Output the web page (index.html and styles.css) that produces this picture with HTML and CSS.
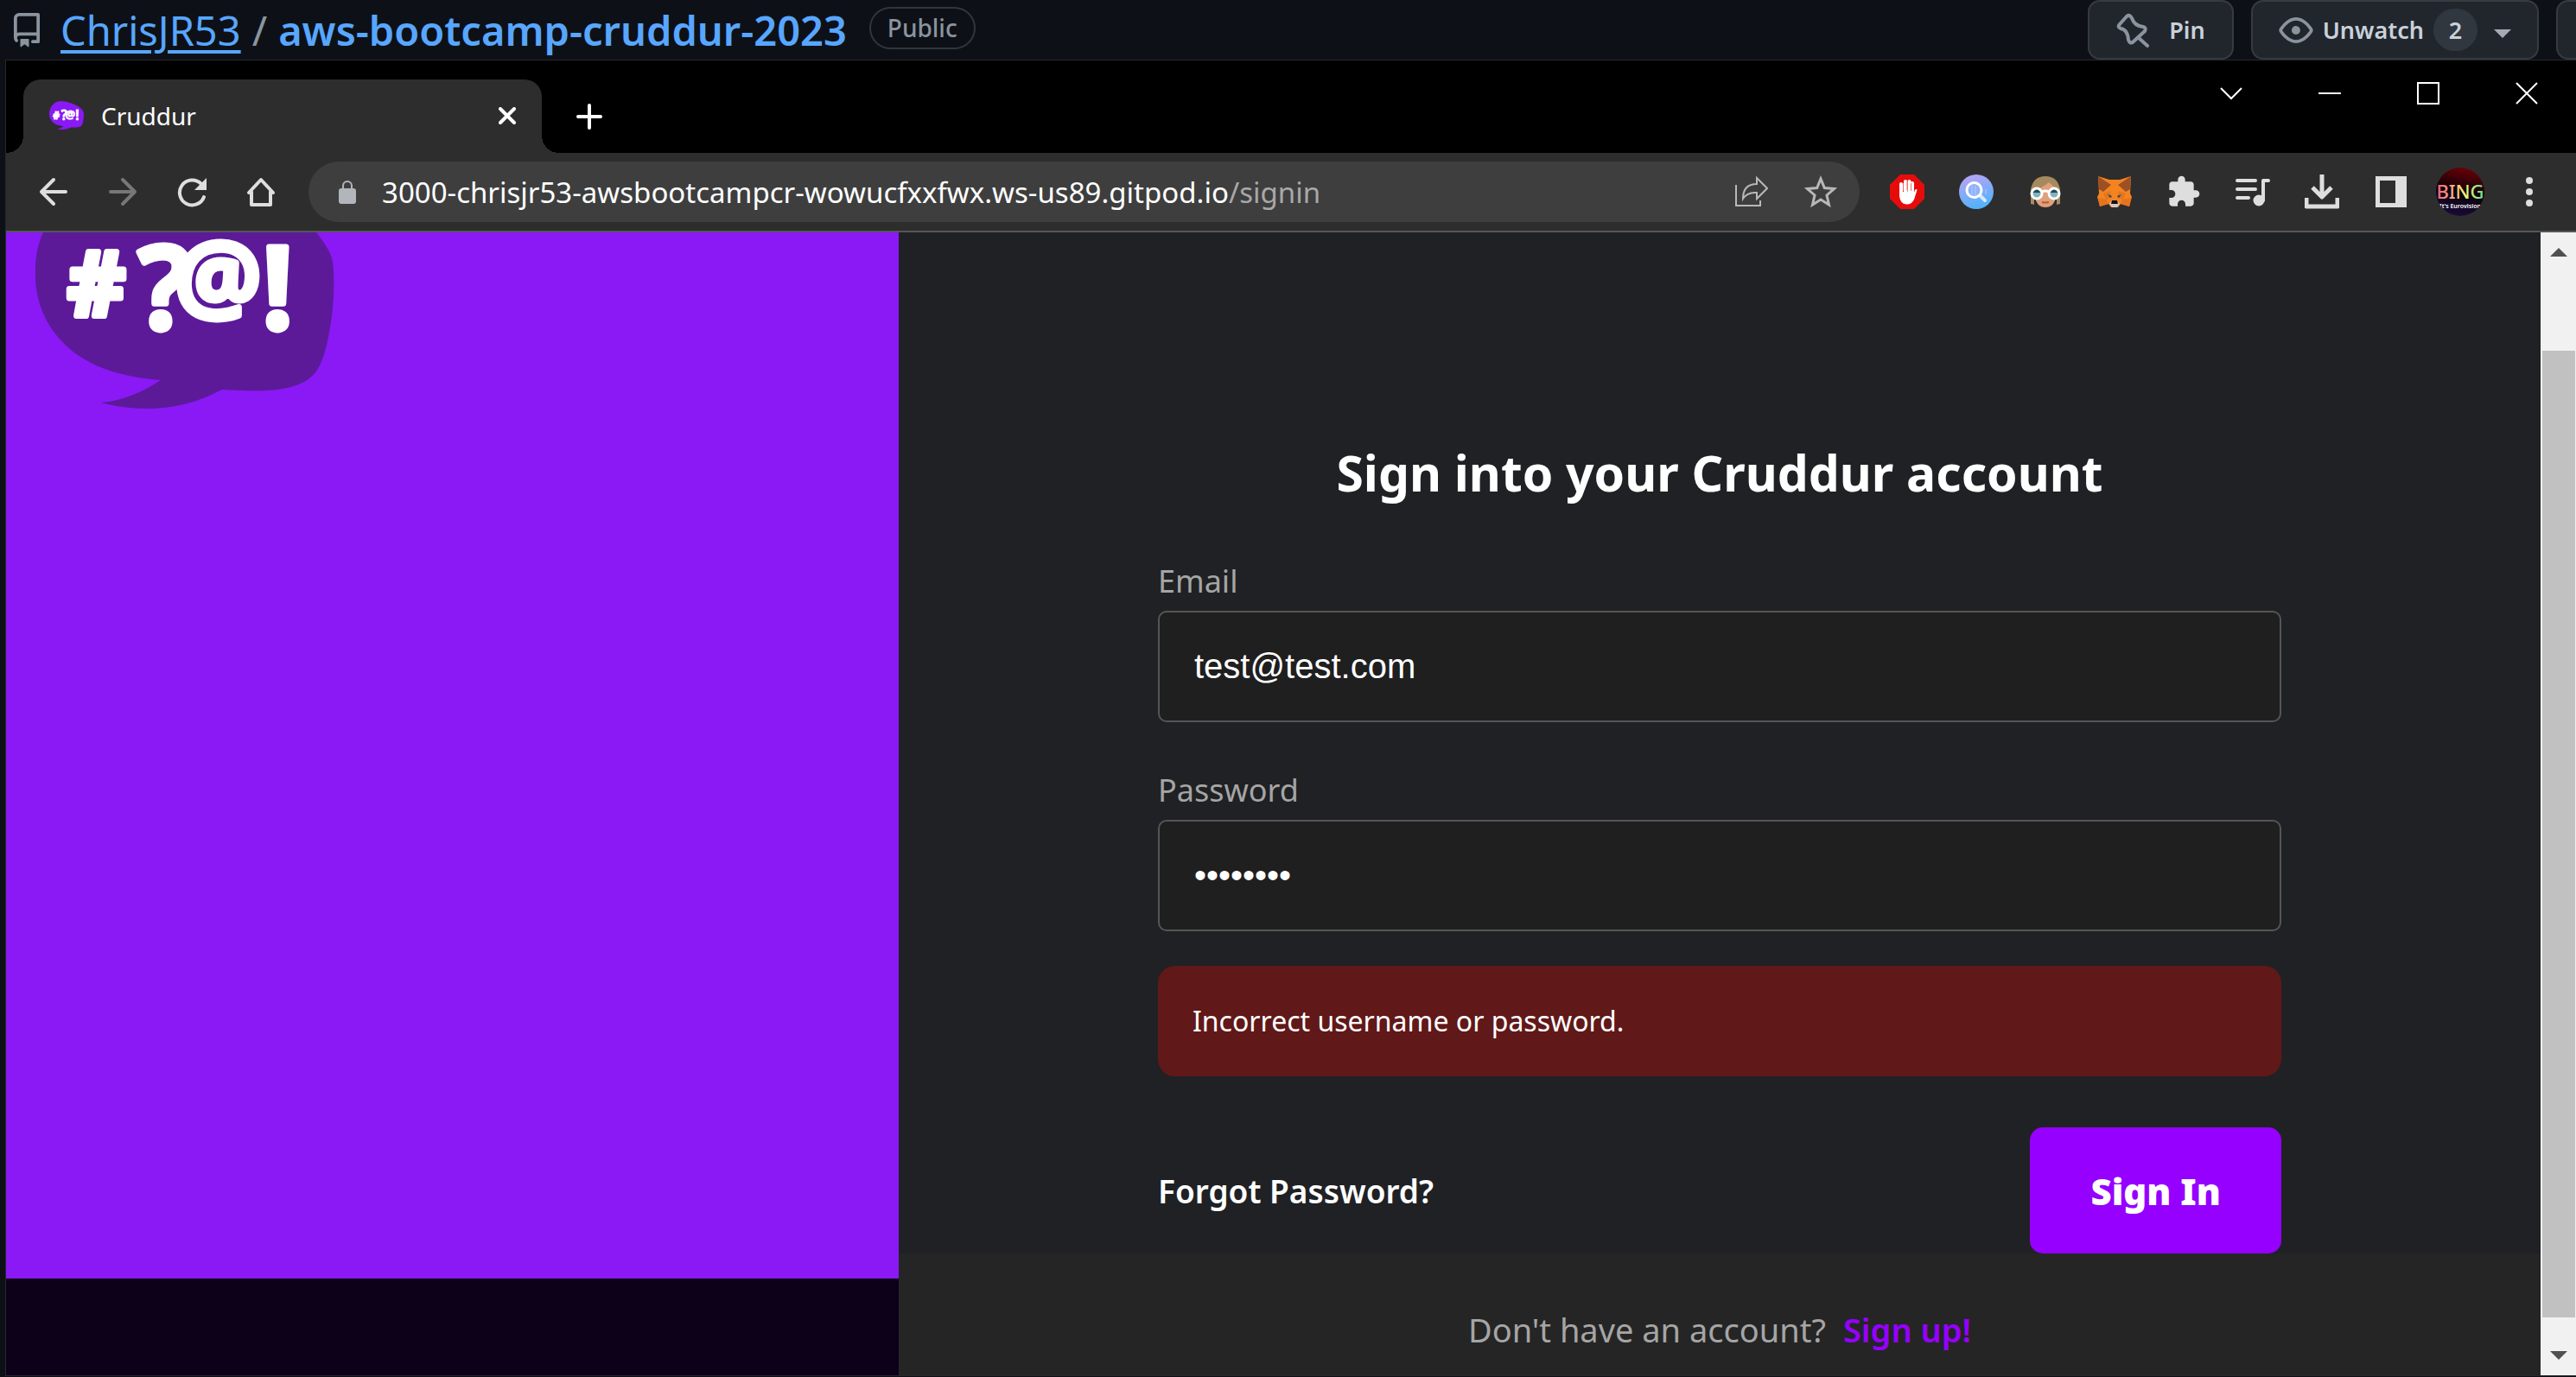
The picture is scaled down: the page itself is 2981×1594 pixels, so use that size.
FILE: index.html
```html
<!DOCTYPE html>
<html lang="en">
<head>
<meta charset="utf-8">
<meta name="viewport" content="width=device-width, initial-scale=1">
<title>Cruddur</title>
<link rel="stylesheet" href="styles.css">
</head>
<body>

<svg class="defs" aria-hidden="true">
  <defs>
    <g id="logo">
      <path fill="currentColor" d="M41 322C40 302 43 284 50 269C66 225 105 188 158 188C225 190 325 226 366 269C376 282 383 292 385 303C388 330 386 360 380 390C374 420 367 435 350 443C327 454 300 453 257 451C232 464 205 473 170 473C150 473 132 470 117 466C142 464 165 454 186 440C150 437 118 430 90 411C60 390 42 358 41 322Z"/>
      <g class="logo-text">
        <text x="78" y="366" font-size="104">#</text>
        <text x="160" y="380" font-size="132" font-weight="600">?</text>
        <text x="202" y="361" font-size="112" font-weight="600">@</text>
        <text x="303" y="380" font-size="132" font-weight="600">!</text>
      </g>
    </g>
  </defs>
</svg>

<header class="repo-bar">
  <svg class="repo-icon" width="40" height="40" viewBox="0 0 16 16" fill="#8b949e" aria-hidden="true"><path d="M2 2.5A2.5 2.5 0 0 1 4.5 0h8.75a.75.75 0 0 1 .75.75v12.5a.75.75 0 0 1-.75.75h-2.5a.75.75 0 0 1 0-1.5h1.75v-2h-8a1 1 0 0 0-.714 1.7.75.75 0 1 1-1.072 1.05A2.495 2.495 0 0 1 2 11.5Zm10.5-1h-8a1 1 0 0 0-1 1v6.708A2.486 2.486 0 0 1 4.5 9h8ZM5 12.25a.25.25 0 0 1 .25-.25h3.5a.25.25 0 0 1 .25.25v3.25a.25.25 0 0 1-.4.2l-1.45-1.087a.249.249 0 0 0-.3 0L5.4 15.7a.25.25 0 0 1-.4-.2Z"/></svg>
  <div class="repo-path">
    <a class="owner" href="#owner">ChrisJR53</a>
    <span class="slash">/</span>
    <a class="repo" href="#repo">aws-bootcamp-cruddur-2023</a>
  </div>
  <span class="visibility">Public</span>
  <div class="repo-actions">
    <button class="gh-button pin" type="button">
      <svg width="38" height="40" viewBox="0 0 38 40" fill="none" stroke="#8b949e" stroke-width="4" stroke-linecap="round" stroke-linejoin="round" aria-hidden="true"><path d="M12 4L4 13Q1 16 5 18Q13 19 14 31Q16 37 20 33L33 21Q35 17 31 16Q21 15 18 6Q15 1 12 4ZM25 28L36 38"/></svg>
      Pin
    </button>
    <button class="gh-button watch" type="button">
      <svg width="40" height="40" viewBox="0 0 16 16" fill="#8b949e" aria-hidden="true"><path d="M8 2c1.981 0 3.671.992 4.933 2.078 1.27 1.091 2.187 2.345 2.637 3.023a1.62 1.62 0 0 1 0 1.798c-.45.678-1.367 1.932-2.637 3.023C11.67 13.008 9.981 14 8 14c-1.981 0-3.671-.992-4.933-2.078C1.797 10.83.88 9.576.43 8.898a1.62 1.62 0 0 1 0-1.798c.45-.677 1.367-1.931 2.637-3.022C4.33 2.992 6.019 2 8 2ZM1.679 7.932a.12.12 0 0 0 0 .136c.411.622 1.241 1.75 2.366 2.717C5.176 11.758 6.527 12.5 8 12.5c1.473 0 2.825-.742 3.955-1.715 1.124-.967 1.954-2.096 2.366-2.717a.12.12 0 0 0 0-.136c-.412-.621-1.242-1.75-2.366-2.717C10.824 4.242 9.473 3.5 8 3.5c-1.473 0-2.825.742-3.955 1.715-1.124.967-1.954 2.096-2.366 2.717ZM8 10a2 2 0 1 1-.001-3.999A2 2 0 0 1 8 10Z"/></svg>
      <span>Unwatch</span>
      <span class="count">2</span>
      <svg class="caret" width="20" height="10" viewBox="0 0 20 10" fill="#a5abb5" aria-hidden="true"><path d="M0 0H20L10 10Z"/></svg>
    </button>
    <button class="gh-button more" type="button" aria-label="Fork"></button>
  </div>
</header>

<div class="window">
  <div class="tab-strip">
    <div class="tab">
      <svg class="favicon" width="40" height="33" viewBox="41 188 346 285" aria-hidden="true"><use href="#logo"/></svg>
      <span class="tab-title">Cruddur</span>
      <button class="tab-close" type="button" aria-label="Close tab"><svg width="20" height="20" viewBox="0 0 20 20" fill="none" stroke="#fff" stroke-width="4" stroke-linecap="round"><path d="M2 2L18 18M18 2L2 18"/></svg></button>
    </div>
    <button class="new-tab" type="button" aria-label="New tab"><svg width="30" height="30" viewBox="0 0 30 30" fill="none" stroke="#fff" stroke-width="4" stroke-linecap="round"><path d="M15 2V28M2 15H28"/></svg></button>
    <div class="window-controls">
      <button type="button" aria-label="Search tabs"><svg width="26" height="26" viewBox="0 0 26 26" fill="none" stroke="#fff" stroke-width="2"><path d="M1 7L13 19L25 7"/></svg></button>
      <button type="button" aria-label="Minimize"><svg width="26" height="26" viewBox="0 0 26 26" fill="none" stroke="#fff" stroke-width="2"><path d="M0 13H26"/></svg></button>
      <button type="button" aria-label="Maximize"><svg width="26" height="26" viewBox="0 0 26 26" fill="none" stroke="#fff" stroke-width="2"><path d="M1 1H25V25H1Z"/></svg></button>
      <button type="button" aria-label="Close"><svg width="26" height="26" viewBox="0 0 26 26" fill="none" stroke="#fff" stroke-width="2"><path d="M1 1L25 25M25 1L1 25"/></svg></button>
    </div>
  </div>

  <div class="toolbar">
    <button class="tool" type="button" aria-label="Back"><svg width="34" height="34" viewBox="0 0 34 34" fill="none" stroke="#dedede" stroke-width="4" stroke-linecap="round" stroke-linejoin="round"><path d="M17 3L3 17L17 31M3 17H31"/></svg></button>
    <button class="tool" type="button" aria-label="Forward" disabled><svg width="34" height="34" viewBox="0 0 34 34" fill="none" stroke="#777" stroke-width="4" stroke-linecap="round" stroke-linejoin="round"><path d="M17 3L31 17L17 31M31 17H3"/></svg></button>
    <button class="tool" type="button" aria-label="Reload"><svg width="36" height="36" viewBox="0 0 36 36" fill="none"><path d="M32 24A14.500 14.500 0 1 1 28.500 8.500" stroke="#dedede" stroke-width="4" stroke-linecap="round"/><path d="M35 2V16H21Z" fill="#dedede"/></svg></button>
    <button class="tool" type="button" aria-label="Home"><svg width="34" height="34" viewBox="0 0 34 34" fill="none" stroke="#dedede" stroke-width="4" stroke-linecap="round" stroke-linejoin="round"><path d="M3 18L17 3L31 18M6 17V32H28V17"/></svg></button>

    <div class="omnibox">
      <svg width="20" height="27" viewBox="0 0 20 27" aria-hidden="true"><rect y="9" width="20" height="18" rx="3" fill="#b2b5bb"/><path d="M5 10V6a5 5 0 0 1 10 0V10" fill="none" stroke="#b2b5bb" stroke-width="2"/></svg>
      <div class="url">3000-chrisjr53-awsbootcampcr-wowucfxxfwx.ws-us89.gitpod.io<span class="url-path">/signin</span></div>
      <button class="tool" type="button" aria-label="Share"><svg width="38" height="36" viewBox="0 0 38 36" fill="none" stroke="#b8b8b8" stroke-width="2"><path d="M1 10V34H29V28M25 2L37 14L25 26V19Q14 18 9 26Q9 9 25 9Z"/></svg></button>
      <button class="tool" type="button" aria-label="Bookmark"><svg width="38" height="38" viewBox="0 0 38 38" fill="none" stroke="#b8b8b8" stroke-width="3"><path d="M19 4L23.300 14.500L34.500 15.500L26 23L28.500 34L19 28L9.500 34L12 23L3.500 15.500L14.700 14.500Z"/></svg></button>
    </div>

    <button class="tool" type="button" aria-label="Ad blocker"><svg width="40" height="40" viewBox="0 0 40 40"><path d="M12 0H28L40 12V28L28 40H12L0 28V12Z" fill="#e60c0c"/><g stroke="#fff" stroke-width="4" stroke-linecap="round"><path d="M13 11V24M18 8V22M22.500 8V22M26 10V24"/></g><path d="M11 20H27.500V22L29 18Q31 16 31.500 18L28 29Q25 35 19 34.500Q12 34 11 25Z" fill="#fff"/><path d="M15.500 10V19M20 8V18M24.500 10V19" stroke="#f46b6b"/></svg></button>
    <button class="tool" type="button" aria-label="Search extension"><svg width="40" height="40" viewBox="0 0 40 40"><defs><linearGradient id="lens" x1=".3" y1="0" x2=".6" y2="1"><stop offset="0" stop-color="#b9a3f5"/><stop offset="1" stop-color="#4cb3fb"/></linearGradient></defs><circle cx="20" cy="20" r="20" fill="url(#lens)"/><path d="M24 24L30 30" stroke="#d5e8ff" stroke-width="4" stroke-linecap="round"/><circle cx="17.500" cy="18" r="8.500" fill="#8eb2fa" stroke="#fff" stroke-width="3"/><path d="M15 14V23M19 13V24M31 17V23" stroke="#b6ccff" stroke-width="1"/></svg></button>
    <button class="tool" type="button" aria-label="Spectacles extension"><svg width="40" height="40" viewBox="0 0 40 40"><path d="M3 34V17Q6 2 20 2Q34 2 37 17V34L33 35V20H7V35Z" fill="#a68a5f"/><path d="M7 18Q16 16 24 9L32 16V26Q30 38 20 38Q10 38 8 26Z" fill="#dfa07a"/><circle cx="10" cy="22" r="6" fill="#80b4bd" stroke="#fff" stroke-width="3"/><circle cx="30" cy="22" r="6" fill="#80b4bd" stroke="#fff" stroke-width="3"/><path d="M5.500 21Q10 14 14.500 21ZM25.500 21Q30 14 34.500 21Z" fill="#26484f"/><path d="M16 20Q20 18 24 20" stroke="#fff" stroke-width="3" fill="none"/><path d="M16 32Q20 33 24 32" stroke="#b55c42" stroke-width="2" fill="none"/></svg></button>
    <button class="tool" type="button" aria-label="Wallet extension"><svg width="40" height="40" viewBox="0 0 40 40"><path d="M1 2L14 6H26L39 2L38 22L40 26L37 37L27 34L24 38H16L13 34L3 37L0 26L2 22Z" fill="#f58320"/><path d="M1 2L16 12L7 20L2 17ZM39 2L24 12L33 20L38 17Z" fill="#9c5024"/><path d="M7 22L15 19L17 27L10 29ZM33 22L25 19L23 27L30 29Z" fill="#e17720"/><path d="M3 37L13 34L11 29L1 27ZM37 37L27 34L29 29L39 27Z" fill="#e7731e"/><path d="M12 23L17 25L15 27ZM28 23L23 25L25 27Z" fill="#26455a"/><path d="M14 34L17 30H23L26 34L23 38H17Z" fill="#d5c8bd"/><path d="M17 30H23L24 34H16Z" fill="#111"/></svg></button>
    <button class="tool" type="button" aria-label="Extensions"><svg width="40" height="40" viewBox="0 0 24 24" fill="#dedede"><path d="M20.500 11H19V7c0-1.100-.9-2-2-2h-4V3.500C13 2.120 11.880 1 10.500 1S8 2.120 8 3.500V5H4c-1.100 0-1.990.9-1.990 2v3.800H3.500c1.490 0 2.700 1.210 2.700 2.700s-1.210 2.700-2.700 2.700H2V20c0 1.100.9 2 2 2h3.800v-1.500c0-1.490 1.210-2.700 2.700-2.700 1.490 0 2.700 1.210 2.700 2.700V22H17c1.100 0 2-.9 2-2v-4h1.500c1.380 0 2.500-1.120 2.500-2.500S21.880 11 20.500 11z"/></svg></button>
    <button class="tool" type="button" aria-label="Media controls"><svg width="40" height="34" viewBox="0 0 40 34" fill="none" stroke="#dedede" stroke-width="4" stroke-linecap="round"><path d="M2 4H23M2 14H23M2 24H15"/><path d="M32 27V4H38" stroke-linejoin="round"/><circle cx="27" cy="27" r="5" fill="#dedede" stroke-width="3"/></svg></button>
    <button class="tool" type="button" aria-label="Downloads"><svg width="40" height="42" viewBox="0 0 40 42" fill="none" stroke="#dedede" stroke-width="5"><path d="M20 1V26M9 16L20 27L31 16M2 28V38H38V28" stroke-linejoin="round"/></svg></button>
    <button class="tool" type="button" aria-label="Side panel"><svg width="36" height="36" viewBox="0 0 36 36"><path fill="#dedede" fill-rule="evenodd" d="M0 0H36V36H0ZM5 5V31H23V5Z"/></svg></button>
    <button class="tool" type="button" aria-label="Profile"><svg width="56" height="56" viewBox="0 0 56 56"><defs><linearGradient id="night" x1=".6" y1="0" x2=".4" y2="1"><stop offset="0" stop-color="#6b0006"/><stop offset=".5" stop-color="#0c0208"/><stop offset="1" stop-color="#190a3a"/></linearGradient><linearGradient id="neon"><stop offset="0" stop-color="#ff5a72"/><stop offset=".35" stop-color="#ffb08c"/><stop offset=".6" stop-color="#f4f46c"/><stop offset="1" stop-color="#5ee0a0"/></linearGradient><clipPath id="disc"><circle cx="28" cy="28" r="28"/></clipPath></defs><g clip-path="url(#disc)"><path fill="url(#night)" d="M0 0H56V56H0Z"/><text class="neon-name" x="28" y="36" fill="url(#neon)">BING</text><text class="neon-note" x="28" y="47" fill="#fff">It's Eurovision</text></g></svg></button>
    <button class="tool" type="button" aria-label="Menu"><svg width="10" height="34" viewBox="0 0 10 34" fill="#dedede"><circle cx="5" cy="4" r="4"/><circle cx="5" cy="17" r="4"/><circle cx="5" cy="30" r="4"/></svg></button>
  </div>

  <div class="viewport">
    <main class="page">
      <div class="brand">
        <div class="brand-fill">
          <svg class="brand-logo" width="346" height="204" viewBox="41 269 346 204" role="img" aria-label="Cruddur"><use href="#logo"/></svg>
        </div>
      </div>
      <div class="signin">
        <form class="signin-form">
          <h1>Sign into your Cruddur account</h1>
          <div class="field">
            <label for="email">Email</label>
            <input id="email" type="text" value="test@test.com">
          </div>
          <div class="field">
            <label for="password">Password</label>
            <input id="password" type="password" value="password">
          </div>
          <div class="error" role="alert">Incorrect username or password.</div>
          <div class="submit">
            <a href="#forgot">Forgot Password?</a>
            <button type="submit">Sign In</button>
          </div>
        </form>
        <div class="signup">
          <span>Don't have an account?</span>
          <a href="#signup">Sign up!</a>
        </div>
      </div>
    </main>
    <div class="scrollbar" aria-hidden="true">
      <div class="scroll-arrow"><svg width="20" height="10" viewBox="0 0 20 10" fill="#505050"><path d="M0 10H20L10 0Z"/></svg></div>
      <div class="scroll-thumb"></div>
      <div class="scroll-arrow"><svg width="20" height="10" viewBox="0 0 20 10" fill="#505050"><path d="M0 0H20L10 10Z"/></svg></div>
    </div>
  </div>
</div>

</body>
</html>
```
FILE: styles.css
```css
*,
*::before,
*::after {
  box-sizing: border-box;
}

body {
  margin: 0;
  min-height: 100vh;
  display: flex;
  flex-direction: column;
  background: #0d1117;
  color: #fff;
  font-family: "Noto Sans", "Open Sans", sans-serif;
}

a {
  color: inherit;
  text-decoration: none;
}

button {
  border: 0;
  padding: 0;
  background: none;
  color: inherit;
  font: inherit;
}

svg {
  display: block;
  flex: none;
}

.defs {
  position: absolute;
  width: 0;
  height: 0;
}

/* Repository header */
.repo-bar {
  display: flex;
  align-items: center;
  height: 69px;
  padding-left: 11px;
  overflow: hidden;
}

.repo-path {
  display: flex;
  gap: 13px;
  margin-left: 19px;
  color: #58a6ff;
  font-size: 47px;
  line-height: 68px;
}

.owner {
  text-decoration: underline;
  text-decoration-thickness: 4px;
  text-underline-offset: 5px;
}

.slash {
  color: #8b949e;
}

.repo {
  font-weight: 600;
}

.visibility {
  height: 49px;
  margin: 0 0 4px 26px;
  padding: 0 19px;
  border: 2px solid #30363d;
  border-radius: 25px;
  color: #8b949e;
  font-size: 28px;
  font-weight: 500;
  line-height: 45px;
}

.repo-actions {
  display: flex;
  gap: 20px;
  margin-left: auto;
}

.gh-button {
  display: flex;
  align-items: center;
  height: 69px;
  border: 2px solid #363b42;
  border-radius: 14px;
  background: #21262d;
  color: #c9d1d9;
  font-size: 27px;
  font-weight: 600;
}

.pin {
  gap: 23px;
  padding: 0 31px;
}

.watch {
  gap: 11px;
  padding: 0 30px;
}

.count {
  width: 51px;
  height: 49px;
  border-radius: 25px;
  background: #31373e;
  line-height: 49px;
}

.caret {
  margin: 8px 0 0 8px;
}

.more {
  width: 23px;
  border-right: 0;
  border-radius: 14px 0 0 14px;
}

/* Browser window */
.window {
  flex: 1;
  display: flex;
  flex-direction: column;
  margin: 0 0 1px 6px;
  border: solid #26282b;
  border-width: 1px 0 1px 1px;
}

.tab-strip {
  display: flex;
  height: 107px;
  padding: 22px 0 0 20px;
  background: #000;
}

.tab {
  position: relative;
  display: flex;
  align-items: center;
  width: 600px;
  padding: 0 30px 2px;
  border-radius: 20px 20px 0 0;
  background: #2d2d2d;
  font-size: 28px;
}

.tab::before,
.tab::after {
  content: "";
  position: absolute;
  bottom: 0;
  width: 20px;
  height: 20px;
}

.tab::before {
  right: 100%;
  background: radial-gradient(circle at 0 0, #000 20px, #2d2d2d 20px);
}

.tab::after {
  left: 100%;
  background: radial-gradient(circle at 100% 0, #000 20px, #2d2d2d 20px);
}

.favicon {
  color: #8a19f5;
}

.tab-title {
  flex: 1;
  margin-left: 20px;
}

.new-tab {
  margin-left: 40px;
}

.window-controls {
  display: flex;
  height: 76px;
  margin: -22px 0 0 auto;
}

.window-controls button {
  display: grid;
  place-items: center;
  width: 114px;
}

.toolbar {
  display: flex;
  align-items: center;
  height: 92px;
  padding: 0 14px 0 15px;
  border-bottom: 2px solid #565656;
  background: #2d2d2d;
}

.tool {
  display: grid;
  place-items: center;
  flex: none;
  width: 80px;
  height: 70px;
}

.omnibox {
  flex: 1;
  display: flex;
  align-items: center;
  min-width: 0;
  margin: 0 15px;
  padding: 0 5px 0 35px;
  border-radius: 35px;
  background: #3e3e3e;
}

.url {
  flex: 1;
  margin-left: 30px;
  overflow: hidden;
  font-size: 33px;
  white-space: nowrap;
}

.url-path {
  color: #a8a8a8;
}

/* Lettering inside the logo and the profile picture */
.logo-text {
  fill: #fff;
  stroke: #fff;
  stroke-width: 7px;
  stroke-linejoin: round;
  font-weight: 700;
}

.neon-name {
  font-size: 22px;
  font-weight: 500;
  text-anchor: middle;
}

.neon-note {
  font-size: 7px;
  font-weight: 600;
  text-anchor: middle;
}

/* Page content */
.viewport {
  flex: 1;
  display: flex;
}

.page {
  flex: 1;
  display: grid;
  grid-template-columns: 1033fr 1900fr;
}

.brand {
  padding-bottom: 112px;
  background: #0c0118;
}

.brand-fill {
  height: 100%;
  padding-left: 34px;
  background: #8a19f5;
}

.brand-logo {
  color: #5c1a99;
}

.signin {
  display: flex;
  flex-direction: column;
  background: #202124;
}

.signin-form {
  width: 100%;
  max-width: 1300px;
  margin: 0 auto;
  padding-top: 238px;
}

h1 {
  margin: 0 0 61px;
  font-size: 57px;
  font-weight: 700;
  line-height: 80px;
  text-align: center;
}

.field {
  display: flex;
  flex-direction: column;
  gap: 9px;
}

.field + .field {
  margin-top: 54px;
}

.field label {
  color: #a5a5a5;
  font-size: 36px;
  line-height: 50px;
}

.field input {
  height: 129px;
  padding: 0 40px;
  border: 2px solid #555;
  border-radius: 10px;
  background: #1f1f1f;
  color: #fff;
  font-family: "Liberation Sans", Arial, sans-serif;
  font-size: 40px;
}

.error {
  margin-top: 40px;
  padding: 42px 40px;
  border-radius: 20px;
  background: #611819;
  font-size: 32px;
  line-height: 44px;
}

.submit {
  display: flex;
  align-items: center;
  justify-content: space-between;
  margin-top: 59px;
  font-size: 37px;
  font-weight: 600;
}

.submit button {
  height: 146px;
  padding: 0 70px;
  border-radius: 15px;
  background: #9500ff;
  font-size: 42px;
  font-weight: 900;
}

.signup {
  flex: 1;
  display: flex;
  justify-content: center;
  gap: 20px;
  padding: 60px 0 24px;
  background: #252525;
  color: #a5a5a5;
  font-size: 38px;
  line-height: 56px;
}

.signup a {
  color: #9500ff;
  font-weight: 600;
}

/* Scrollbar */
.scrollbar {
  display: flex;
  flex-direction: column;
  width: 41px;
  background: #f1f1f1;
}

.scroll-arrow {
  display: grid;
  place-items: center;
  height: 46px;
}

.scroll-thumb {
  flex: 1;
  margin: 91px 1px 21px 2px;
  background: #c1c1c1;
}
```
